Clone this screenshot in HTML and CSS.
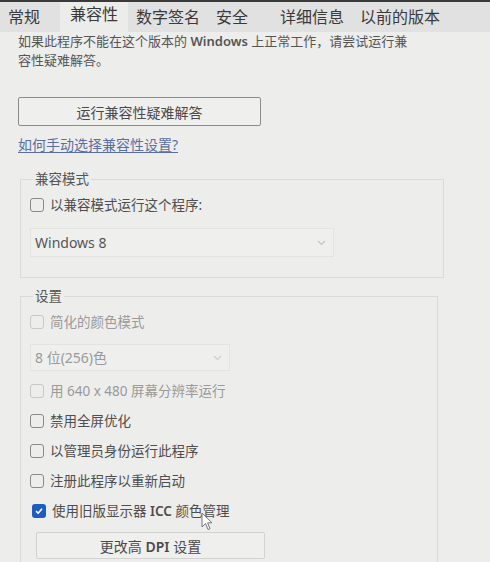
FILE: index.html
```html
<!DOCTYPE html>
<html lang="zh-CN">
<head>
    <meta charset="UTF-8">
    <meta name="viewport" content="width=device-width, initial-scale=1.0">
    <title>属性 - 兼容性</title>
    <link rel="stylesheet" href="styles.css">
</head>
<body>
    <div class="tabs">
        <span class="tab">常规</span>
        <span class="tab tab-active">兼容性</span>
        <span class="tab">数字签名</span>
        <span class="tab">安全</span>
        <span class="tab tab-far">详细信息</span>
        <span class="tab">以前的版本</span>
    </div>

    <div class="page">
        <div class="intro">
            <span class="intro-line">如果此程序不能在这个版本的 <b>Windows</b> 上正常工作，请尝试运行兼</span>
            <span class="intro-line">容性疑难解答。</span>
        </div>

        <button class="btn btn-wide">运行兼容性疑难解答</button>

        <a class="help-link" href="#">如何手动选择兼容性设置?</a>

        <fieldset class="group">
            <legend>兼容模式</legend>
            <div class="check">
                <span class="box"></span>
                <span>以兼容模式运行这个程序:</span>
            </div>
            <div class="select select-wide">
                <span>Windows 8</span>
                <svg class="chev" width="9" height="6" viewBox="0 0 9 6"><polyline points="1,1 4.5,4.5 8,1" fill="none" stroke="#c4c4c4" stroke-width="1.2"/></svg>
            </div>
        </fieldset>

        <fieldset class="group group-settings">
            <legend>设置</legend>
            <div class="check off">
                <span class="box"></span>
                <span>简化的颜色模式</span>
            </div>
            <div class="select select-short off">
                <span>8 位(256)色</span>
                <svg class="chev" width="9" height="6" viewBox="0 0 9 6"><polyline points="1,1 4.5,4.5 8,1" fill="none" stroke="#cfcfcf" stroke-width="1.2"/></svg>
            </div>
            <div class="check off spaced">
                <span class="box"></span>
                <span>用 640 x 480 屏幕分辨率运行</span>
            </div>
            <div class="check spaced">
                <span class="box"></span>
                <span>禁用全屏优化</span>
            </div>
            <div class="check spaced">
                <span class="box"></span>
                <span>以管理员身份运行此程序</span>
            </div>
            <div class="check spaced">
                <span class="box"></span>
                <span>注册此程序以重新启动</span>
            </div>
            <div class="check spaced">
                <span class="box box-on">
                    <svg width="10" height="10" viewBox="0 0 10 10"><polyline points="2,5.2 4.2,7.2 8,2.8" fill="none" stroke="#fff" stroke-width="1.6"/></svg>
                </span>
                <span>使用旧版显示器 <b>ICC</b> 颜色管理</span>
            </div>
            <button class="btn btn-dpi">更改高 <b>DPI</b> 设置</button>
        </fieldset>
    </div>

    <!-- mouse pointer over the last option -->
    <svg class="cursor" width="12" height="19" viewBox="0 0 12 19">
        <path d="M1 1 L1 15 L4.5 11.5 L7 17.5 L9 16.6 L6.6 10.8 L11 10.8 Z" fill="#fff" stroke="#777" stroke-width="1"/>
    </svg>
</body>
</html>
```

FILE: styles.css
```css
/* Compatibility tab */
* {
    margin: 0;
    padding: 0;
    box-sizing: border-box;
}

body {
    position: relative;
    width: 490px;
    height: 562px;
    overflow: hidden;
    background-color: #ededec;
    color: #4a4a4a;
    font-family: "Noto Sans", "Noto Sans CJK SC", sans-serif;
    font-size: 13.5px;
    line-height: 15px;
}

b {
    font-weight: 600;
}

.tabs {
    display: flex;
    height: 32px;
    border-top: 2px solid #3a3a3a;
    background-color: #e1e1e1;
    color: #3a3a3a;
    font-size: 16px;
    line-height: 31px;
}

.tab {
    padding: 0 8px;
}

.tab-active {
    margin-left: 12px;
    padding: 0 10px;
    background-color: #ececeb;
    line-height: 24px;
}

.tab-far {
    margin-left: 16px;
}

.page {
    padding: 0 18px;
}

.intro {
    color: #555;
    font-size: 13px;
}

.intro-line {
    display: block;
    line-height: 19px;
}

.btn {
    display: block;
    background-color: #efefee;
    border: 1px solid #8c8c8c;
    border-radius: 2px;
    color: #4a4a4a;
    font-family: inherit;
    font-size: 14px;
}

.btn-wide {
    width: 243px;
    height: 29px;
    margin-top: 27px;
}

.help-link {
    display: inline-block;
    margin-top: 11px;
    color: #5a6fa3;
    font-size: 14px;
    line-height: 16px;
    text-decoration: underline;
    text-underline-offset: 2px;
}

.group {
    width: 424px;
    margin: 19px 0 0 2px;
    padding: 8px 9px 20px;
    border: 1px solid #dadada;
}

.group-settings {
    width: 418px;
    margin-top: 11px;
    padding-bottom: 4px;
}

.group legend {
    margin-left: 3px;
    padding: 0 2px;
    color: #555;
    font-size: 13.5px;
    line-height: 15px;
}

.check {
    display: flex;
    align-items: center;
    gap: 6px;
    height: 20px;
    color: #4e4e4e;
}

.spaced {
    margin-top: 10px;
}

.box {
    display: flex;
    align-items: center;
    justify-content: center;
    width: 14px;
    height: 14px;
    border: 1.5px solid #8a8a8a;
    border-radius: 3px;
}

.box-on {
    margin-left: 2px;
    border: none;
    background-color: #1e5cc0;
}

.off {
    color: #9a9a9a;
}

.off .box {
    border-color: #c8c8c8;
}

.select {
    display: flex;
    align-items: center;
    justify-content: space-between;
    padding: 0 7px 0 4px;
    border: 1px solid #e3e3e2;
    background-color: #efefee;
    font-size: 14px;
}

.select-wide {
    width: 304px;
    height: 29px;
    margin-top: 13px;
    color: #555;
}

.select-short {
    width: 200px;
    height: 27px;
    margin-top: 12px;
}

.btn-dpi {
    width: 229px;
    height: 27px;
    margin: 11px 0 0 6px;
    border-color: #d2d2d2;
}

.cursor {
    position: absolute;
    left: 201px;
    top: 512px;
}
```
